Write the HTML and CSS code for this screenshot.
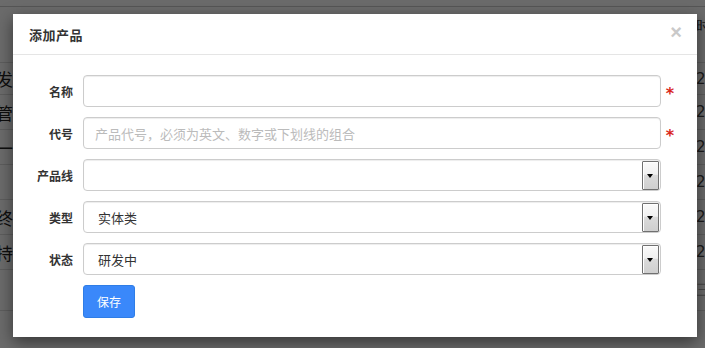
FILE: index.html
```html
<!DOCTYPE html>
<html lang="zh">
<head>
<meta charset="utf-8">
<title>添加产品</title>
<link rel="stylesheet" href="styles.css">
</head>
<body>
<div class="page">
  <div class="row head"><div class="cell-l"></div><div class="cell-r">时间</div></div>
  <div class="row r1"><div class="cell-l">研发</div><div class="cell-r">26</div></div>
  <div class="row"><div class="cell-l">主管</div><div class="cell-r">26</div></div>
  <div class="row"><div class="cell-l">一</div><div class="cell-r">26</div></div>
  <div class="row"><div class="cell-l"></div><div class="cell-r">26</div></div>
  <div class="row"><div class="cell-l">最终</div><div class="cell-r">25</div></div>
  <div class="row"><div class="cell-l">支持</div><div class="cell-r">25</div></div>
  <div class="row tall"><div class="cell-l"></div><div class="cell-r faint">三</div></div>
</div>
<div class="backdrop"></div>
<div class="modal">
  <div class="modal-header">
    <h4 class="modal-title">添加产品</h4>
    <span class="close">×</span>
  </div>
  <form class="modal-body">
    <div class="form-row">
      <label class="label">名称</label>
      <input class="control" type="text">
      <span class="req">*</span>
    </div>
    <div class="form-row">
      <label class="label">代号</label>
      <input class="control" type="text" placeholder="产品代号，必须为英文、数字或下划线的组合">
      <span class="req">*</span>
    </div>
    <div class="form-row">
      <label class="label">产品线</label>
      <div class="select"><span class="value"></span><span class="arrow"></span></div>
      <span class="req"></span>
    </div>
    <div class="form-row">
      <label class="label">类型</label>
      <div class="select"><span class="value">实体类</span><span class="arrow"></span></div>
      <span class="req"></span>
    </div>
    <div class="form-row">
      <label class="label">状态</label>
      <div class="select"><span class="value">研发中</span><span class="arrow"></span></div>
      <span class="req"></span>
    </div>
    <div class="form-row">
      <span class="label"></span>
      <div class="actions"><button type="button" class="btn">保存</button></div>
    </div>
  </form>
</div>
</body>
</html>
```

FILE: styles.css
```css
* { box-sizing: border-box; }
html, body { margin: 0; padding: 0; }
body {
  width: 705px;
  height: 348px;
  overflow: hidden;
  background: #fff;
  font-family: "Noto Sans CJK SC", "Noto Sans", sans-serif;
  color: #333;
  position: relative;
}
.page {
  display: flex;
  flex-direction: column;
  padding-top: 6px;
}
.row {
  height: 35px;
  display: flex;
  justify-content: space-between;
  align-items: center;
  border-bottom: 1px solid #ddd;
  font-size: 17px;
  color: #222;
}
.row.head { height: 57px; border-top: 1px solid #ccc; padding-top: 10px; align-items: flex-start; }
.row.r1 { height: 32px; }
.row.tall { height: 41px; }
.cell-l {
  width: 13px;
  overflow: hidden;
  display: flex;
  justify-content: flex-end;
  white-space: nowrap;
}
.cell-r {
  width: 9px;
  overflow: hidden;
  white-space: nowrap;
  font-family: "DejaVu Sans", sans-serif;
  font-size: 15px;
  color: #444;
}
.cell-r.faint { color: #aaa; }
.backdrop {
  position: absolute;
  inset: 0;
  background: rgba(0, 0, 0, 0.58);
}
.modal {
  position: absolute;
  left: 13px;
  top: 14px;
  width: 684px;
  height: 323px;
  background: #fff;
  box-shadow: 0 5px 15px rgba(0, 0, 0, 0.5);
  display: flex;
  flex-direction: column;
}
.modal-header {
  height: 41px;
  border-bottom: 1px solid #e5e5e5;
  display: flex;
  align-items: center;
  justify-content: space-between;
  padding: 0 15px 0 16px;
}
.modal-title {
  margin: 0;
  font-size: 13px;
  font-weight: bold;
  color: #333;
  letter-spacing: 0.5px;
}
.close {
  font-family: "Liberation Sans", Arial, sans-serif;
  font-size: 20px;
  font-weight: bold;
  color: #c9c9c9;
  line-height: 1;
  margin-top: -5px;
}
.modal-body {
  margin: 0;
  padding: 20px 0 0 0;
  display: flex;
  flex-direction: column;
  gap: 10px;
}
.form-row {
  display: flex;
  align-items: center;
  height: 32px;
}
.label {
  width: 60px;
  text-align: right;
  font-size: 12px;
  font-weight: bold;
  color: #333;
}
.control, .select {
  margin-left: 10px;
  width: 578px;
  height: 32px;
  border: 1px solid #ccc;
  border-radius: 4px;
  box-shadow: inset 0 1px 1px rgba(0, 0, 0, 0.075);
  background: #fff;
  font-family: "Noto Sans CJK SC", sans-serif;
  font-size: 13px;
  color: #333;
  padding: 0 11px;
  outline: none;
}
.control::placeholder { color: #bbb; }
.select {
  position: relative;
  display: flex;
  align-items: center;
  padding-left: 14px;
}
.arrow {
  position: absolute;
  right: 1px;
  top: 1px;
  width: 17px;
  height: 29px;
  border: 1px solid #707070;
  border-radius: 1px;
  background: linear-gradient(#fafafa 0%, #f0f0f0 45%, #dadada 50%, #cfcfcf 100%);
  box-shadow: inset 1px 1px 0 #fff;
}
.arrow::after {
  content: "";
  position: absolute;
  left: 4px;
  top: 12px;
  border-left: 3.5px solid transparent;
  border-right: 3.5px solid transparent;
  border-top: 4px solid #000;
}
.req {
  width: 14px;
  margin-left: 2px;
  color: #d9261c;
  font-size: 16px;
  line-height: 1;
  font-family: "DejaVu Sans", sans-serif;
  font-weight: bold;
  text-align: center;
  padding-top: 6px;
}
.actions { margin-left: 10px; height: 33px; }
.btn {
  height: 33px;
  width: 52px;
  padding: 0;
  border: 1px solid #2f7de6;
  border-radius: 3px;
  background: #3a88fa;
  color: #fff;
  font-family: "Noto Sans CJK SC", sans-serif;
  font-size: 12px;
}
.form-row:last-child { height: 33px; }
```
